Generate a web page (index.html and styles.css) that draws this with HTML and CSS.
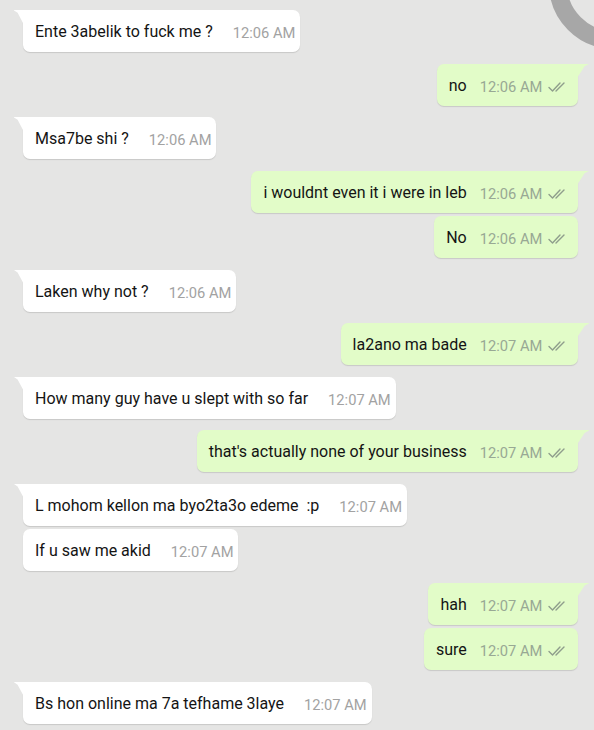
FILE: index.html
```html
<!DOCTYPE html>
<html lang="en">
<head>
  <meta charset="UTF-8" />
  <meta name="viewport" content="width=device-width, initial-scale=1.0"/>
  <title>Chat</title>
  <link rel="stylesheet" href="styles.css">
</head>
<body>
  <div class="screen">
    <div class="ring"></div>

    <div class="chat">
      <div class="msg in tail">
        <span class="text">Ente 3abelik to fuck me ?</span>
        <span class="time">12:06 AM</span>
      </div>

      <div class="msg out tail">
        <span class="text">no</span>
        <span class="time">12:06 AM <svg class="ticks" viewBox="0 0 22 12"><path d="M2 6.5 L5.5 10 L13 2 M9 10 L17 2"/></svg></span>
      </div>

      <div class="msg in tail">
        <span class="text">Msa7be shi ?</span>
        <span class="time">12:06 AM</span>
      </div>

      <div class="msg out tail">
        <span class="text">i wouldnt even it i were in leb</span>
        <span class="time">12:06 AM <svg class="ticks" viewBox="0 0 22 12"><path d="M2 6.5 L5.5 10 L13 2 M9 10 L17 2"/></svg></span>
      </div>

      <div class="msg out cont">
        <span class="text">No</span>
        <span class="time">12:06 AM <svg class="ticks" viewBox="0 0 22 12"><path d="M2 6.5 L5.5 10 L13 2 M9 10 L17 2"/></svg></span>
      </div>

      <div class="msg in tail">
        <span class="text">Laken why not ?</span>
        <span class="time">12:06 AM</span>
      </div>

      <div class="msg out tail">
        <span class="text">la2ano ma bade</span>
        <span class="time">12:07 AM <svg class="ticks" viewBox="0 0 22 12"><path d="M2 6.5 L5.5 10 L13 2 M9 10 L17 2"/></svg></span>
      </div>

      <div class="msg in tail">
        <span class="text">How many guy have u slept with so far</span>
        <span class="time">12:07 AM</span>
      </div>

      <div class="msg out tail">
        <span class="text">that's actually none of your business</span>
        <span class="time">12:07 AM <svg class="ticks" viewBox="0 0 22 12"><path d="M2 6.5 L5.5 10 L13 2 M9 10 L17 2"/></svg></span>
      </div>

      <div class="msg in tail">
        <span class="text">L mohom kellon ma byo2ta3o edeme&nbsp; :p</span>
        <span class="time">12:07 AM</span>
      </div>

      <div class="msg in cont">
        <span class="text">If u saw me akid</span>
        <span class="time">12:07 AM</span>
      </div>

      <div class="msg out tail">
        <span class="text">hah</span>
        <span class="time">12:07 AM <svg class="ticks" viewBox="0 0 22 12"><path d="M2 6.5 L5.5 10 L13 2 M9 10 L17 2"/></svg></span>
      </div>

      <div class="msg out cont">
        <span class="text">sure</span>
        <span class="time">12:07 AM <svg class="ticks" viewBox="0 0 22 12"><path d="M2 6.5 L5.5 10 L13 2 M9 10 L17 2"/></svg></span>
      </div>

      <div class="msg in tail">
        <span class="text">Bs hon online ma 7a tefhame 3laye</span>
        <span class="time">12:07 AM</span>
      </div>
    </div>
  </div>
</body>
</html>
```

FILE: styles.css
```css
body {
  margin: 0;
  background-color: #e5e5e4;
  font-family: Roboto, "Liberation Sans", sans-serif;
}

.screen {
  position: relative;
  height: 730px;
  overflow: hidden;
}

.ring {
  position: absolute;
  left: 549px;
  top: -81px;
  width: 94px;
  height: 94px;
  border: 18px solid #a7a7a7;
  border-radius: 50%;
}

.chat {
  display: flex;
  flex-direction: column;
  padding: 10px 16px 0 23px;
}

.msg {
  position: relative;
  display: flex;
  align-items: baseline;
  height: 42px;
  box-sizing: border-box;
  padding: 11px 5px 0 12px;
  line-height: 22px;
  border-radius: 7px;
  box-shadow: 0 1px 1px rgba(0, 0, 0, 0.13);
  margin-top: 11.5px;
}

.msg:first-child {
  margin-top: 0;
}

.msg.cont {
  margin-top: 3.6px;
}

.in {
  align-self: flex-start;
  background-color: #ffffff;
}

.out {
  align-self: flex-end;
  background-color: #e2fcc8;
  padding-right: 9px;
}

.in.tail {
  border-top-left-radius: 0;
}

.out.tail {
  border-top-right-radius: 0;
}

.in.tail::before {
  content: "";
  position: absolute;
  left: -9px;
  top: 0;
  width: 9px;
  height: 13px;
  background-color: #ffffff;
  clip-path: polygon(0 0, 100% 0, 100% 100%, 40% 22%, 0 4%);
}

.out.tail::before {
  content: "";
  position: absolute;
  right: -11px;
  top: 0;
  width: 11px;
  height: 13px;
  background-color: #e2fcc8;
  clip-path: polygon(0 0, 100% 0, 100% 4%, 60% 22%, 0 100%);
}

.text {
  font-size: 16px;
  color: #141414;
  white-space: pre;
}

.time {
  font-size: 14.7px;
  color: #a2a2a2;
  margin-left: 20px;
  transform: translateY(1px);
  white-space: nowrap;
}

.out .time {
  color: #98a894;
  margin-left: 13px;
}

.ticks {
  width: 22px;
  height: 12px;
  margin-left: 1px;
  vertical-align: -1px;
}

.ticks path {
  fill: none;
  stroke: #8f9e8c;
  stroke-width: 1.4;
  stroke-linecap: round;
  stroke-linejoin: round;
}
```
